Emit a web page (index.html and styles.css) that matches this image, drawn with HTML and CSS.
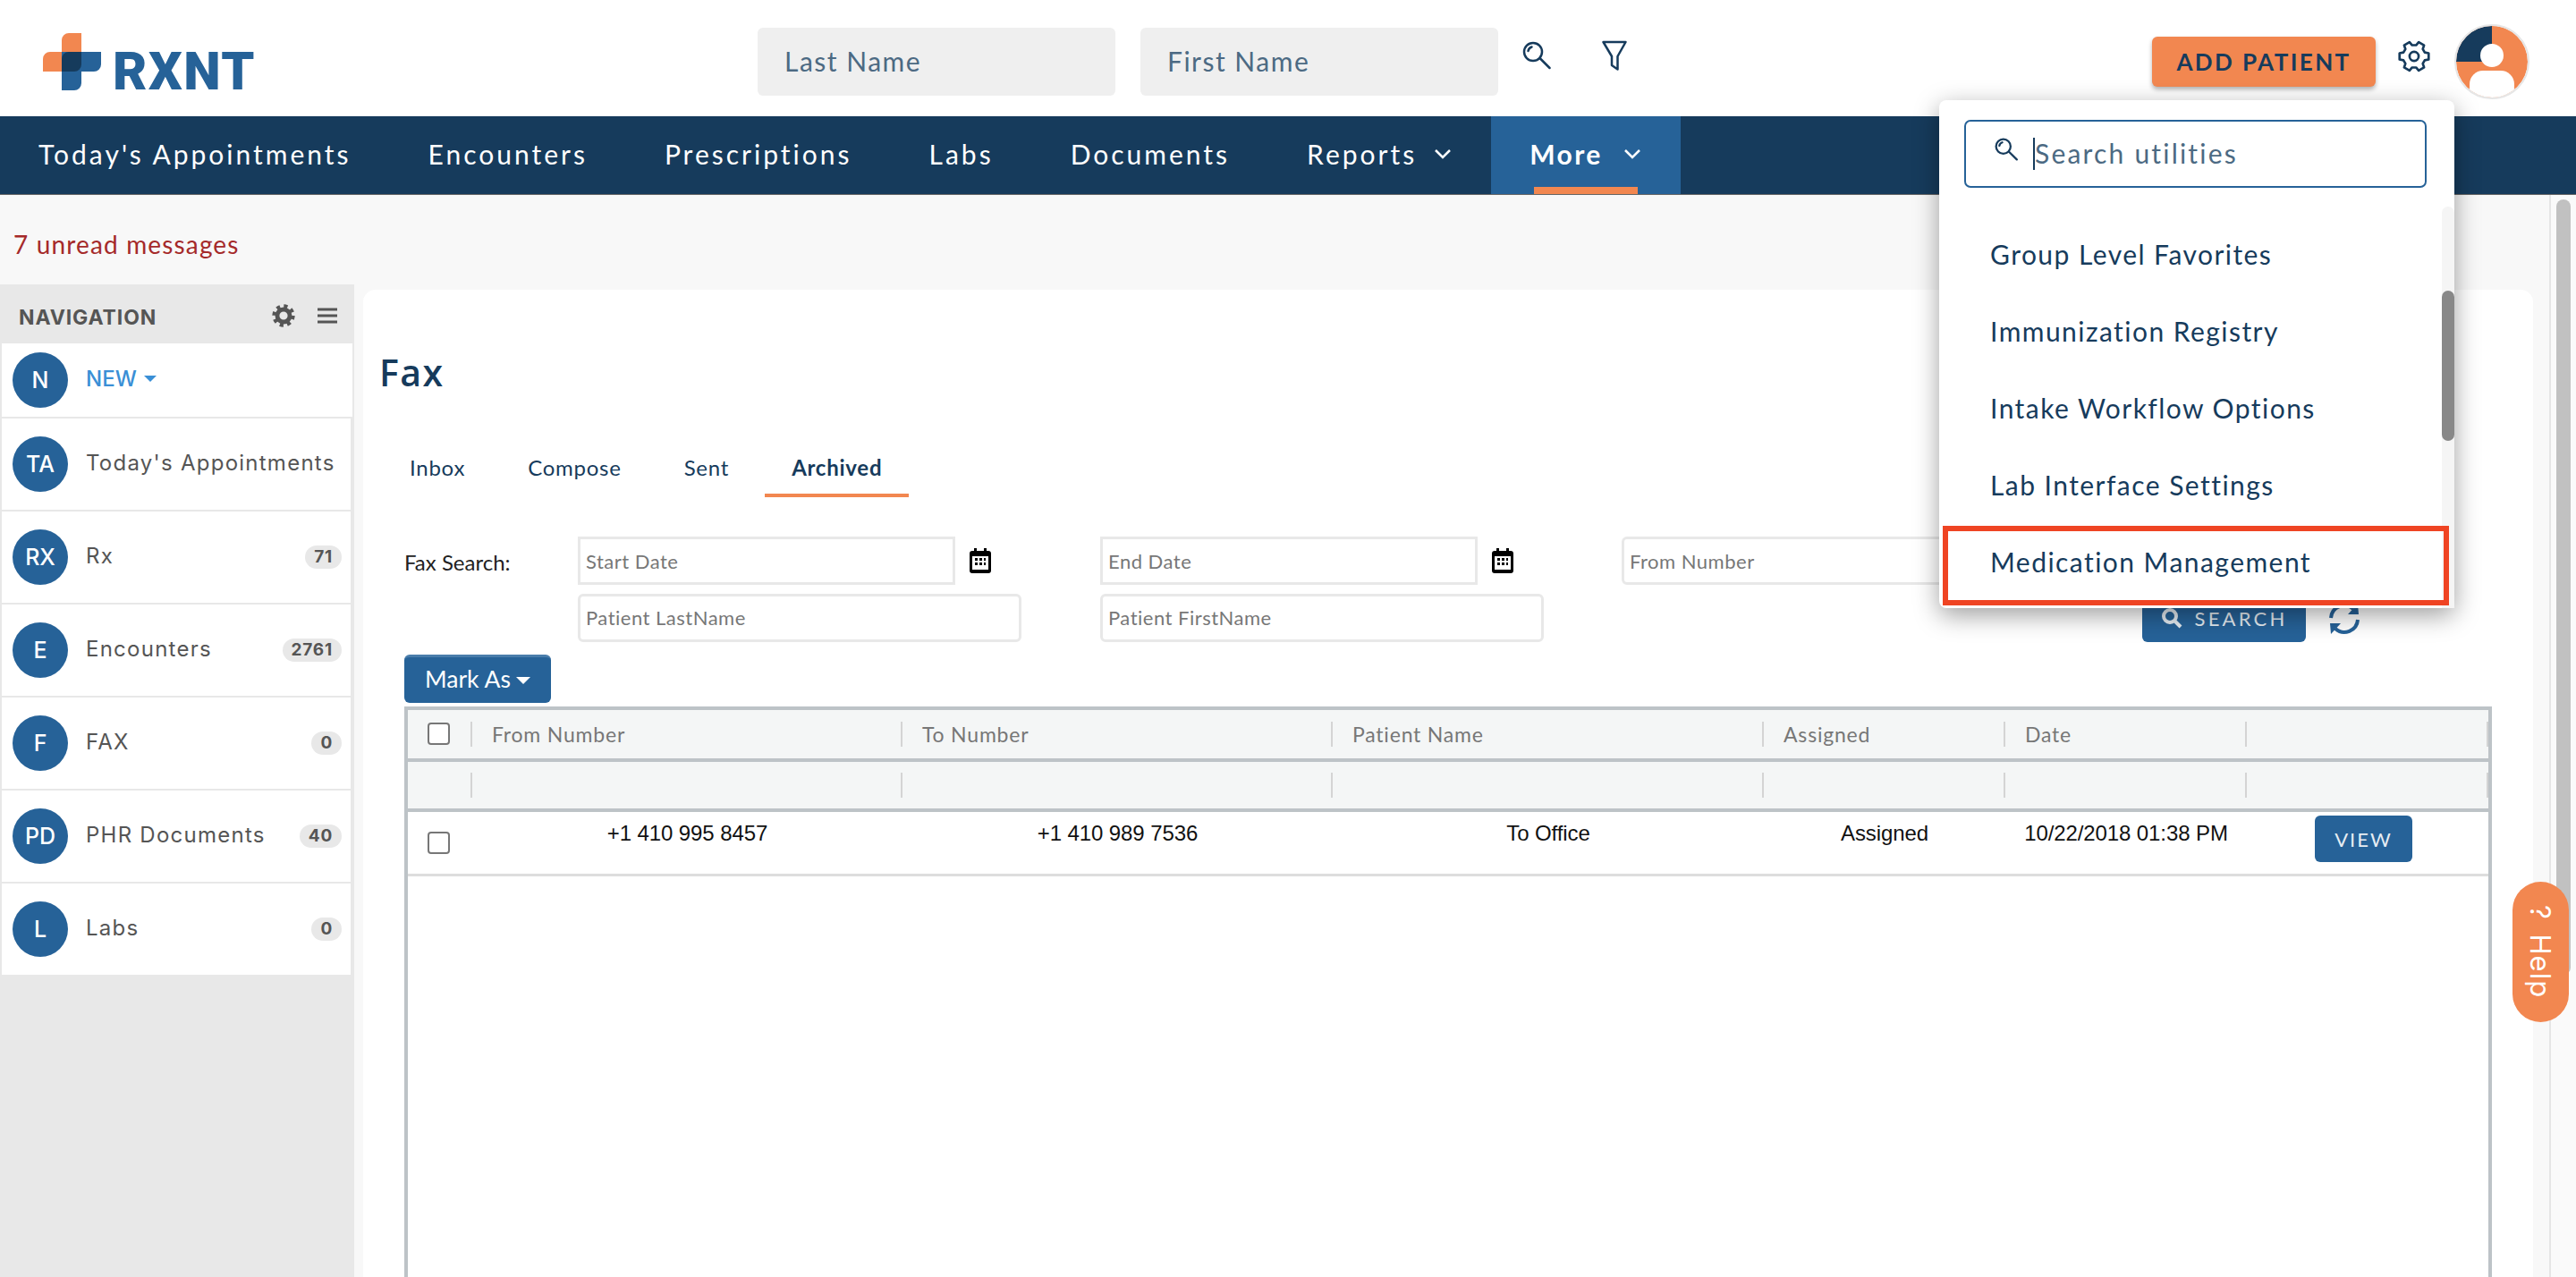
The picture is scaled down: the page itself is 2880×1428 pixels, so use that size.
FILE: index.html
```html
<!DOCTYPE html>
<html lang="en">
  <head>
    <meta charset="UTF-8" />
    <link rel="stylesheet" href="styles.css">
    <title>RXNT Fax</title>
  </head>
  <body>
    <header class="top-bar">
      <a class="logo">
        <svg width="65" height="64" viewBox="0 0 65 64" class="logo-cross">
          <path d="M21 8a8 8 0 0 1 8-8h14v43H21V43H0V29a8 8 0 0 1 8-8h13z" fill="#f28750" />
          <path d="M21 21h44v14a8 8 0 0 1-8 8H43v13a8 8 0 0 1-8 8H21z" fill="#266298" />
          <path d="M29 21h14v14a8 8 0 0 1-8 8H21V29a8 8 0 0 1 8-8z" fill="#163b5c" />
        </svg>
        <span class="logo-text">RXNT</span>
      </a>
      <div class="patient-search">
        <input class="top-input" placeholder="Last Name" />
        <input class="top-input" placeholder="First Name" />
        <svg class="icon-search" width="32" height="32" viewBox="0 0 32 32">
          <circle cx="12" cy="12" r="10" />
          <path d="M6.5 11a6 6 0 0 1 4-4.500" />
          <path d="M19.500 19l11 11" />
        </svg>
        <svg class="icon-filter" width="28" height="34" viewBox="0 0 28 34">
          <path d="M1.500 2h25L17.500 18v14.500L11 28V18z" />
        </svg>
      </div>
      <div class="top-actions">
        <button class="add-patient">ADD PATIENT</button>
        <svg class="icon-gear" width="38" height="38" viewBox="-12 -12 24 24">
          <polygon points="7.52,-2.74 10.27,-2.18 10.27,2.18 7.52,2.74 6.13,5.14 7.03,7.8 3.24,9.99 1.39,7.88 -1.39,7.88 -3.24,9.99 -7.03,7.8 -6.13,5.14 -7.52,2.74 -10.27,2.18 -10.27,-2.18 -7.52,-2.74 -6.13,-5.14 -7.03,-7.8 -3.24,-9.99 -1.39,-7.88 1.39,-7.88 3.24,-9.99 7.03,-7.8 6.13,-5.14" />
          <circle r="3.2" />
        </svg>
        <svg class="avatar" width="84" height="84" viewBox="0 0 84 84">
          <clipPath id="avatar-clip"><circle cx="42" cy="42" r="40" /></clipPath>
          <circle cx="42" cy="42" r="40" fill="#f28750" />
          <path d="M42 42V2A40 40 0 0 0 2 42z" fill="#163b5c" />
          <circle cx="42" cy="35" r="13" fill="#fff" />
          <rect x="17" y="52" width="50" height="44" rx="15" fill="#fff" clip-path="url(#avatar-clip)" />
          <circle cx="42" cy="42" r="41" fill="none" stroke="#e6e6e6" stroke-width="2" />
        </svg>
      </div>
    </header>

    <nav class="main-nav">
      <a class="nav-item">Today's Appointments</a>
      <a class="nav-item">Encounters</a>
      <a class="nav-item">Prescriptions</a>
      <a class="nav-item">Labs</a>
      <a class="nav-item">Documents</a>
      <a class="nav-item">Reports
        <svg class="chevron" width="22" height="12" viewBox="0 0 22 12"><path d="M3 2l8 8 8-8" /></svg>
      </a>
      <a class="nav-item active">More
        <svg class="chevron" width="22" height="12" viewBox="0 0 22 12"><path d="M3 2l8 8 8-8" /></svg>
      </a>
    </nav>

    <div class="page">
      <div class="page-main">
        <div class="unread">7 unread messages</div>
        <div class="page-columns">
          <aside class="sidebar">
            <div class="side-head">
              <span>NAVIGATION</span>
              <svg class="side-cog" width="26" height="26" viewBox="0 0 24 24">
                <circle cx="12" cy="12" r="6.500" fill="none" stroke="#555" stroke-width="4.500" />
                <circle cx="12" cy="12" r="9.800" fill="none" stroke="#555" stroke-width="3.800" stroke-dasharray="3.800 3.897" />
              </svg>
              <svg class="side-bars" width="24" height="20" viewBox="0 0 24 20">
                <path d="M1 3h22M1 10h22M1 17h22" />
              </svg>
            </div>
            <div class="side-item side-new">
              <span class="side-badge">N</span>
              <span class="side-new-label">NEW</span><span class="side-caret"></span>
            </div>
            <div class="side-item"><span class="side-badge">TA</span><span class="side-label">Today's Appointments</span></div>
            <div class="side-item"><span class="side-badge">RX</span><span class="side-label">Rx</span><span class="side-count">71</span></div>
            <div class="side-item"><span class="side-badge">E</span><span class="side-label">Encounters</span><span class="side-count">2761</span></div>
            <div class="side-item"><span class="side-badge">F</span><span class="side-label">FAX</span><span class="side-count">0</span></div>
            <div class="side-item"><span class="side-badge">PD</span><span class="side-label">PHR Documents</span><span class="side-count">40</span></div>
            <div class="side-item"><span class="side-badge">L</span><span class="side-label">Labs</span><span class="side-count">0</span></div>
          </aside>

          <main class="card">
            <h1>Fax</h1>
            <div class="tabs">
              <a class="tab">Inbox</a>
              <a class="tab">Compose</a>
              <a class="tab">Sent</a>
              <a class="tab active">Archived</a>
            </div>

            <div class="fax-filters">
              <label class="filter-label">Fax Search:</label>
              <div class="filter-grid">
                <div class="filter-cell">
                  <input class="field field-date" placeholder="Start Date" />
                  <svg class="icon-cal" width="24" height="28" viewBox="0 0 24 28">
                    <path d="M5 0h3v4H5zM16 0h3v4h-3z" />
                    <rect x="0" y="3" width="24" height="25" rx="3" />
                    <rect x="3" y="9" width="18" height="15" fill="#fff" />
                    <path d="M6 11h3v3H6zM11 11h3v3h-3zM16 11h2v3h-2zM6 16h3v3H6zM11 16h3v3h-3zM16 16h2v3h-2z" />
                  </svg>
                </div>
                <div class="filter-cell">
                  <input class="field field-date" placeholder="End Date" />
                  <svg class="icon-cal" width="24" height="28" viewBox="0 0 24 28">
                    <path d="M5 0h3v4H5zM16 0h3v4h-3z" />
                    <rect x="0" y="3" width="24" height="25" rx="3" />
                    <rect x="3" y="9" width="18" height="15" fill="#fff" />
                    <path d="M6 11h3v3H6zM11 11h3v3h-3zM16 11h2v3h-2zM6 16h3v3H6zM11 16h3v3h-3zM16 16h2v3h-2z" />
                  </svg>
                </div>
                <div class="filter-cell">
                  <input class="field field-rounded" placeholder="From Number" />
                </div>
                <div class="filter-cell">
                  <input class="field field-rounded field-wide" placeholder="Patient LastName" />
                </div>
                <div class="filter-cell">
                  <input class="field field-rounded field-wide" placeholder="Patient FirstName" />
                </div>
                <div class="filter-cell filter-actions">
                  <button class="btn-search">
                    <svg width="24" height="24" viewBox="0 0 24 24">
                      <circle cx="10" cy="10" r="7" />
                      <path d="M15 15l7 7" />
                    </svg>
                    SEARCH
                  </button>
                  <svg class="icon-refresh" width="38" height="36" viewBox="0 0 38 36">
                    <path d="M4 17A15 15 0 0 1 29 7" />
                    <path d="M34 19A15 15 0 0 1 9 29" />
                    <path class="arrow" d="M34 1l1 12H23zM4 35l-1-12h12z" />
                  </svg>
                </div>
              </div>
            </div>

            <button class="btn-mark">Mark As<span class="mark-caret"></span></button>

            <div class="fax-table">
              <div class="t-row t-head">
                <div class="t-cell"><span class="check"></span></div>
                <div class="t-cell">From Number</div>
                <div class="t-cell">To Number</div>
                <div class="t-cell">Patient Name</div>
                <div class="t-cell">Assigned</div>
                <div class="t-cell">Date</div>
                <div class="t-cell"></div>
              </div>
              <div class="t-row t-head t-filter">
                <div class="t-cell"></div>
                <div class="t-cell"></div>
                <div class="t-cell"></div>
                <div class="t-cell"></div>
                <div class="t-cell"></div>
                <div class="t-cell"></div>
                <div class="t-cell"></div>
              </div>
              <div class="t-row t-body">
                <div class="t-cell"><span class="check"></span></div>
                <div class="t-cell">+1 410 995 8457</div>
                <div class="t-cell">+1 410 989 7536</div>
                <div class="t-cell">To Office</div>
                <div class="t-cell">Assigned</div>
                <div class="t-cell">10/22/2018 01:38 PM</div>
                <div class="t-cell"><button class="btn-view">VIEW</button></div>
              </div>
            </div>
          </main>
        </div>
      </div>
      <div class="page-scroll"><div class="page-thumb"></div></div>
    </div>

    <!-- utilities menu, open over the page -->
    <div class="util-menu">
      <div class="util-search">
        <svg class="util-search-icon" width="26" height="26" viewBox="0 0 32 32">
          <circle cx="12" cy="12" r="10" />
          <path d="M6.500 11a6 6 0 0 1 4-4.500" />
          <path d="M19.500 19l11 11" />
        </svg>
        <input class="util-input" placeholder="Search utilities" />
      </div>
      <div class="util-body">
        <ul class="util-list">
          <li>Group Level Favorites</li>
          <li>Immunization Registry</li>
          <li>Intake Workflow Options</li>
          <li>Lab Interface Settings</li>
          <li>Medication Management</li>
        </ul>
        <div class="util-scroll"><div class="util-thumb"></div></div>
      </div>
      <div class="util-highlight"></div>
    </div>

    <a class="help-tab">? Help</a>
  </body>
</html>
```

FILE: styles.css
```css
* {
  box-sizing: border-box;
}
body {
  margin: 0;
  width: 2880px;
  height: 1428px;
  overflow: hidden;
  position: relative;
  display: flex;
  flex-direction: column;
  background-color: #f8f8f8;
  font-family: "Lato", "Liberation Sans", sans-serif;
  color: #163b5c;
}
button {
  border: 0;
  font-family: inherit;
}
input {
  font-family: inherit;
  outline: 0;
}

/* top bar */
.top-bar {
  height: 130px;
  background-color: #fff;
  display: flex;
  align-items: center;
  padding: 7px 0 0 48px;
}
.logo {
  display: flex;
  align-items: flex-end;
  width: 799px;
  height: 64px;
}
.logo-text {
  margin-left: 13px;
  font-family: "Roboto", sans-serif;
  font-weight: 900;
  font-size: 59px;
  line-height: 42px;
  height: 42px;
  letter-spacing: 1.500px;
  color: #266298;
}
.patient-search {
  display: flex;
  align-items: center;
}
.top-input {
  width: 400px;
  height: 76px;
  margin-right: 28px;
  padding: 0 30px 2px;
  background-color: #efefef;
  border: 0;
  border-radius: 6px;
  font-size: 30px;
  letter-spacing: 1.500px;
}
.top-input::placeholder {
  color: #4c6a83;
  opacity: 1;
}
.icon-search,
.util-search-icon {
  fill: none;
  stroke: #163b5c;
  stroke-width: 2.500px;
  stroke-linecap: round;
}
.icon-search {
  margin: -13px 0 0 -1px;
}
.icon-filter {
  margin: -13px 0 0 57px;
  fill: none;
  stroke: #163b5c;
  stroke-width: 2.500px;
  stroke-linejoin: round;
}
.top-actions {
  display: flex;
  align-items: center;
  margin-left: auto;
  padding-right: 52px;
}
.add-patient {
  width: 250px;
  height: 56px;
  background-color: #f28750;
  border-radius: 6px;
  box-shadow: 0 3px 5px rgba(0, 0, 0, 0.3);
  color: #163b5c;
  font-size: 26px;
  font-weight: 700;
  letter-spacing: 2.400px;
}
.icon-gear {
  margin: -11px 26px 0 24px;
  fill: none;
  stroke: #163b5c;
  stroke-width: 1.700px;
  stroke-linejoin: round;
}

/* main nav */
.main-nav {
  height: 88px;
  background-color: #163b5c;
  display: flex;
  border-bottom: 1px solid #666;
}
.nav-item {
  display: flex;
  align-items: center;
  padding: 0 43px 3px;
  color: #fff;
  font-size: 30px;
  letter-spacing: 3px;
  position: relative;
}
.nav-item .chevron {
  margin-left: 18px;
  fill: none;
  stroke: #fff;
  stroke-width: 2.500px;
}
.nav-item.active {
  background-color: #266298;
  font-weight: 700;
  letter-spacing: 2.400px;
}
.nav-item.active .chevron {
  margin-left: 22px;
}
.nav-item.active::after {
  content: "";
  position: absolute;
  left: 48px;
  right: 48px;
  bottom: 0;
  height: 8px;
  background-color: #f28750;
}

/* page */
.page {
  flex: 1;
  display: flex;
  min-height: 0;
}
.page-main {
  flex: 1;
  min-width: 0;
}
.page-scroll {
  width: 30px;
  background-color: #fafafa;
  border-left: 2px solid #e5e5e5;
  padding: 5px 6px 0;
}
.page-thumb {
  width: 16px;
  height: 867px;
  background-color: #c1c1c1;
  border-radius: 8px;
}
.unread {
  height: 100px;
  padding: 40px 0 0 15px;
  font-size: 28px;
  line-height: 30px;
  color: #a52a2a;
  letter-spacing: 1.150px;
}
.page-columns {
  display: flex;
  align-items: flex-start;
}

/* sidebar */
.sidebar {
  width: 396px;
  height: 1110px;
  background-color: #e8e8e8;
  font-family: "Inter", sans-serif;
  color: #555;
}
.side-head {
  height: 66px;
  display: flex;
  align-items: center;
  padding: 7px 0 0 21px;
  font-size: 23px;
  font-weight: 700;
  letter-spacing: 0.900px;
  color: #555;
}
.side-head span {
  flex: 1;
}
.side-cog {
  margin-bottom: 4px;
}
.side-bars {
  margin: 0 18px 4px 24px;
  fill: none;
  stroke: #555;
  stroke-width: 3px;
}
.side-item {
  width: 390px;
  height: 102px;
  margin: 0 0 2px 2px;
  background-color: #fff;
  display: flex;
  align-items: center;
  padding: 0 10px 0 12px;
}
.side-new {
  width: 392px;
  height: 82px;
}
.side-badge {
  width: 62px;
  height: 62px;
  flex: none;
  border-radius: 50%;
  background-color: #266298;
  color: #fff;
  display: flex;
  align-items: center;
  justify-content: center;
  font-size: 25px;
  font-weight: 500;
}
.side-label {
  flex: 1;
  margin: 0 0 3px 20px;
  font-size: 24px;
  letter-spacing: 1.250px;
  white-space: nowrap;
}
.side-new-label {
  margin: 0 0 3px 20px;
  font-size: 24px;
  font-weight: 500;
  color: #3a8fd6;
}
.side-caret {
  margin: 0 0 3px 8px;
  border: 7px solid transparent;
  border-top-color: #3a8fd6;
  border-bottom: 0;
}
.side-count {
  height: 26px;
  padding: 0 10px;
  border-radius: 13px;
  background-color: #e8e8e8;
  font-size: 19px;
  line-height: 26px;
  font-weight: 700;
  letter-spacing: 0.800px;
}

/* card */
.card {
  width: 2426px;
  height: 1110px;
  margin: 6px 0 0 10px;
  padding: 68px 0 0 46px;
  background-color: #fff;
  border-radius: 14px 14px 0 0;
}
h1 {
  margin: 0 0 0 -28px;
  font-family: "Open Sans", sans-serif;
  font-size: 41px;
  line-height: 48px;
  font-weight: 600;
  letter-spacing: 1.500px;
  color: #163b5c;
}
.tabs {
  display: flex;
  gap: 10px;
  margin: 60px 0 0 -24px;
  height: 56px;
}
.tab {
  padding: 0 30px;
  font-size: 24px;
  line-height: 46px;
  color: #163b5c;
  letter-spacing: 0.750px;
}
.tab.active {
  font-weight: 700;
  border-bottom: 4px solid #f28750;
}
.fax-filters {
  display: flex;
  margin-top: 44px;
}
.filter-label {
  width: 194px;
  padding-top: 15px;
  font-size: 24px;
  line-height: 28px;
  color: #222;
}
.filter-grid {
  display: grid;
  grid-template-columns: 584px 583px 1000px;
  row-gap: 10px;
}
.filter-cell {
  display: flex;
  align-items: center;
  height: 54px;
}
.field {
  height: 54px;
  padding: 0 6px;
  border: 3px solid #e8e8e8;
  font-size: 22px;
  letter-spacing: 0.500px;
}
.field::placeholder {
  color: #777;
  opacity: 1;
}
.field-date {
  width: 422px;
}
.field-rounded {
  width: 422px;
  border-radius: 6px;
}
.field-wide {
  width: 496px;
  padding-bottom: 2px;
}
.icon-cal {
  margin-left: 16px;
}
.filter-actions {
  padding-left: 582px;
  align-items: flex-start;
}
.btn-search {
  width: 183px;
  height: 54px;
  flex: none;
  display: flex;
  align-items: center;
  justify-content: center;
  gap: 14px;
  background-color: #266298;
  border-radius: 6px;
  color: #e6edf3;
  font-size: 22px;
  letter-spacing: 3.200px;
}
.btn-search svg {
  fill: none;
  stroke: #e6edf3;
  stroke-width: 4px;
}
.icon-refresh {
  margin: 10px 0 0 24px;
  flex: none;
  fill: none;
  stroke: #266298;
  stroke-width: 4px;
}
.icon-refresh .arrow {
  fill: #266298;
  stroke: none;
}
.btn-mark {
  display: block;
  width: 164px;
  height: 54px;
  margin-top: 14px;
  padding: 0 0 3px;
  background-color: #266298;
  border-radius: 6px;
  border-top: 3px solid #4a7dab;
  color: #fff;
  font-size: 26.500px;
}
.mark-caret {
  display: inline-block;
  margin-left: 6px;
  vertical-align: 4px;
  border: 8px solid transparent;
  border-top-color: #fff;
  border-bottom: 0;
}

/* fax table */
.fax-table {
  width: 2334px;
  height: 640px;
  margin-top: 4px;
  border: 4px solid #bdc3c7;
  border-bottom: 0;
}
.t-row {
  display: grid;
  grid-template-columns: 72px 481px 481px 482px 270px 270px 270px;
}
.t-head {
  height: 58px;
  align-items: center;
  background-color: #f4f6f6;
  border-bottom: 4px solid #bdc3c7;
  color: #777;
  font-size: 23px;
  letter-spacing: 0.800px;
}
.t-filter {
  height: 56px;
}
.t-head .t-cell {
  height: 28px;
  line-height: 28px;
  padding-left: 22px;
  border-right: 2px solid #d4d4d4;
}
.t-head .t-cell:first-child {
  padding-left: 22px;
}
.t-body {
  height: 72px;
  border-bottom: 3px solid #ddd;
  font-family: "Liberation Sans", sans-serif;
  font-size: 24px;
  letter-spacing: -0.100px;
  color: #111;
  text-align: center;
}
.t-body .t-cell {
  padding-top: 11px;
  line-height: 26px;
}
.t-body .t-cell:first-child {
  padding: 22px 0 0 22px;
  text-align: left;
}
.t-body .t-cell:last-child {
  padding: 4px 0 0 76px;
  text-align: left;
}
.check {
  display: block;
  width: 25px;
  height: 25px;
  border: 2px solid #777;
  border-radius: 4px;
  background-color: #fff;
}
.t-head .check {
  margin-top: 1px;
}
.btn-view {
  width: 109px;
  height: 52px;
  background-color: #266298;
  border-radius: 6px;
  color: #e6edf3;
  font-family: "Lato", sans-serif;
  font-size: 22px;
  letter-spacing: 2px;
}

/* utilities dropdown */
.util-menu {
  position: absolute;
  left: 2168px;
  top: 112px;
  width: 576px;
  height: 568px;
  padding: 22px 0 0 28px;
  background-color: #fff;
  border-radius: 8px;
  box-shadow: 0 8px 28px rgba(0, 0, 0, 0.38);
}
.util-search {
  width: 517px;
  height: 76px;
  display: flex;
  align-items: center;
  padding-left: 32px;
  border: 2px solid #266298;
  border-radius: 7px;
}
.util-search-icon {
  margin: -10px 17px 0 0;
  stroke-width: 2.800px;
}
.util-input {
  width: 400px;
  height: 36px;
  padding: 0 0 3px;
  border: 0;
  border-left: 2px solid #163b5c;
  font-size: 30px;
  letter-spacing: 2.200px;
}
.util-input::placeholder {
  color: #4c6a83;
  opacity: 1;
}
.util-body {
  display: flex;
  height: 449px;
  margin-top: 21px;
}
.util-list {
  flex: 1;
  margin: 0;
  padding: 10px 0 0;
  list-style: none;
}
.util-list li {
  height: 86px;
  padding-left: 29px;
  font-size: 30px;
  line-height: 86px;
  letter-spacing: 1.450px;
}
.util-scroll {
  width: 14px;
  background-color: #f5f5f5;
  border-radius: 7px 7px 0 0;
}
.util-thumb {
  width: 14px;
  height: 168px;
  margin-top: 94px;
  background-color: #888;
  border-radius: 7px;
}
.util-highlight {
  position: absolute;
  left: 4px;
  top: 476px;
  width: 566px;
  height: 89px;
  border: 6px solid #ef4423;
}

/* help tab */
.help-tab {
  position: absolute;
  left: 2809px;
  top: 986px;
  width: 63px;
  height: 157px;
  display: flex;
  align-items: center;
  justify-content: center;
  writing-mode: vertical-rl;
  background-color: #f28750;
  border-radius: 32px;
  color: #fff;
  font-family: "Inter", sans-serif;
  font-size: 31px;
  letter-spacing: 1px;
  word-spacing: 6px;
}
```
